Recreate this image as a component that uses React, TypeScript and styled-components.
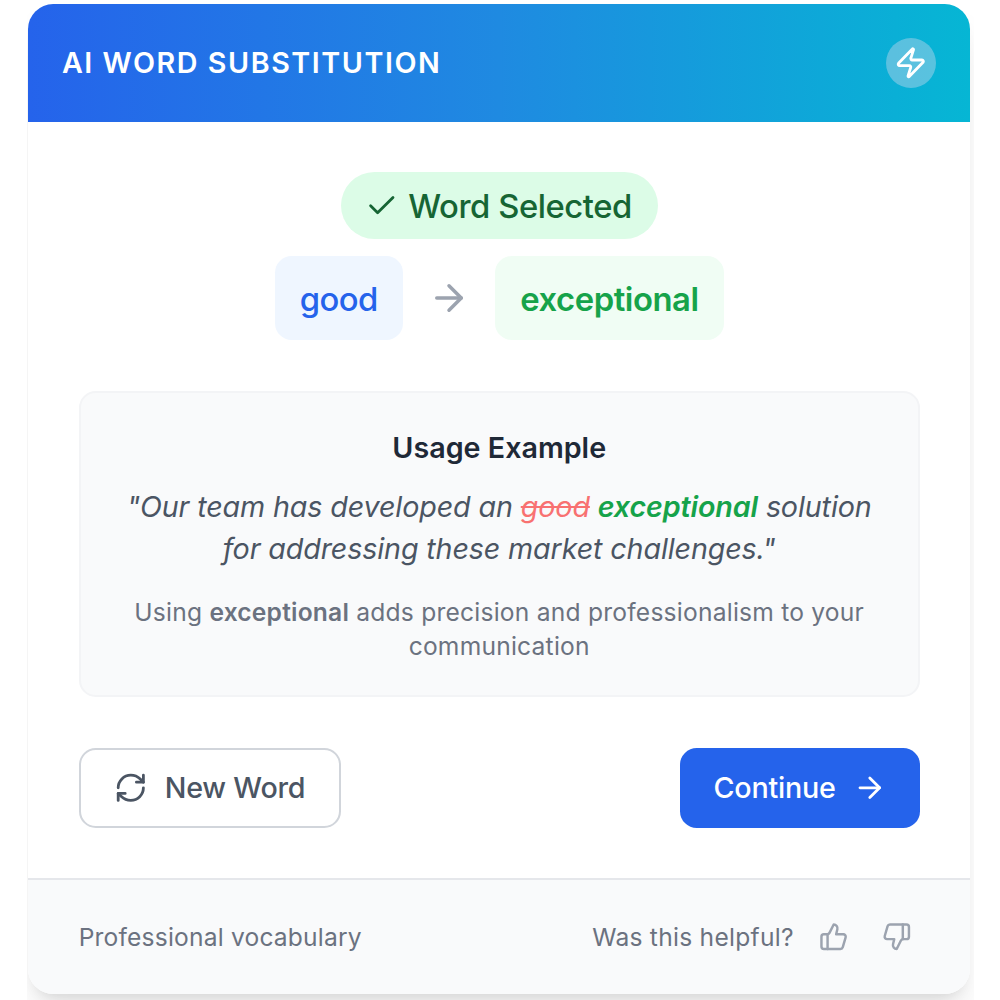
import React from "react";
import styled, { createGlobalStyle } from "styled-components";
import { ArrowRight, Check, RefreshCw, ThumbsDown, ThumbsUp, Zap } from "lucide-react";

const GlobalStyle = createGlobalStyle`
  *, *::before, *::after { box-sizing: border-box; }
  body {
    margin: 0;
    background: #ffffff;
    font-family: Inter, "Liberation Sans", sans-serif;
    -webkit-font-smoothing: antialiased;
  }
  h2, h3, p { margin: 0; }
  svg { display: block; flex-shrink: 0; }
`;

const Stage = styled.main`
  height: 1000px;
  margin: 0 26px 0 27px;
  padding: 4.2px 3.9px 0 1.3px;
  overflow: hidden;
`;

const Card = styled.section`
  border-radius: 25.2px;
  overflow: hidden;
  background: #ffffff;
  box-shadow:
    0 21px 31.5px -6.3px rgba(0, 0, 0, 0.1),
    0 8.4px 12.6px -8.4px rgba(0, 0, 0, 0.1);
`;

const Header = styled.header`
  display: flex;
  align-items: center;
  justify-content: space-between;
  height: 117.6px;
  padding: 0 34.2px 0 33.6px;
  background: linear-gradient(to right, #2563eb, #1f8ae1 50%, #06b6d4);
  color: #ffffff;
`;

const Title = styled.h2`
  padding-top: 1px;
  font-size: 28.7px;
  line-height: 42px;
  font-weight: 600;
  letter-spacing: 1.55px;
  text-transform: uppercase;
`;

const HeaderBadge = styled.div`
  display: flex;
  align-items: center;
  justify-content: center;
  width: 50.4px;
  height: 50.4px;
  border-radius: 50%;
  background: rgba(223, 222, 238, 0.38);
`;

const Content = styled.div`
  display: flex;
  flex-direction: column;
  padding: 50.4px;
`;

const StatusPill = styled.div`
  display: flex;
  align-items: center;
  align-self: center;
  gap: 9.4px;
  height: 67.2px;
  padding: 0 26px 0 24.8px;
  border-radius: 34px;
  background: #dcfce7;
  color: #166534;
  font-size: 32.8px;
  line-height: 50.4px;
  font-weight: 500;
  letter-spacing: -0.45px;

  span { padding-top: 1.4px; }
`;

const Comparison = styled.div`
  display: flex;
  align-items: center;
  justify-content: center;
  gap: 25.2px;
  margin-top: 16.8px;
  color: #9ca3af;
`;

const WordChip = styled.div<{ $tone: "old" | "new" }>`
  padding: 17.8px 25.2px 15.8px;
  border-radius: 16.8px;
  font-size: 32.8px;
  line-height: 50.4px;
  font-weight: ${({ $tone }) => ($tone === "new" ? 600 : 500)};
  letter-spacing: ${({ $tone }) => ($tone === "new" ? "-0.45px" : "-0.6px")};
  color: ${({ $tone }) => ($tone === "new" ? "#16a34a" : "#2563eb")};
  background: ${({ $tone }) => ($tone === "new" ? "#f0fdf4" : "#eff6ff")};
`;

const Example = styled.section`
  margin-top: 50.4px;
  padding: 34.6px 33.6px 32.6px;
  border: 2.1px solid #f3f4f6;
  border-radius: 16.8px;
  background: #f9fafb;
  text-align: center;
`;

const ExampleTitle = styled.h3`
  color: #1f2937;
  font-size: 28.7px;
  line-height: 42px;
  font-weight: 600;
  letter-spacing: 0;
`;

const Quote = styled.p`
  margin-top: 16.8px;
  color: #4b5563;
  font-size: 28.7px;
  line-height: 42px;
  font-style: italic;
  letter-spacing: -0.13px;
`;

const Removed = styled.span`
  color: #f87171;
  text-decoration: line-through;
`;

const Added = styled.span`
  color: #16a34a;
  font-weight: 600;
  letter-spacing: -0.12px;
`;

const Note = styled.p`
  margin-top: 26px;
  margin-bottom: -0.8px;
  color: #6b7280;
  font-size: 24.6px;
  line-height: 33.6px;
  letter-spacing: 0.22px;
`;

const NoteWord = styled.span`
  font-weight: 600;
  letter-spacing: 0.2px;
`;

const Actions = styled.div`
  display: flex;
  justify-content: space-between;
  margin-top: 51.2px;
`;

const Button = styled.button<{ $primary?: boolean }>`
  display: flex;
  align-items: center;
  gap: 16.8px;
  height: 79.8px;
  padding: 0 33.6px;
  border: ${({ $primary }) => ($primary ? "none" : "2.1px solid #d1d5db")};
  border-radius: 16.8px;
  background: ${({ $primary }) => ($primary ? "#2563eb" : "#ffffff")};
  color: ${({ $primary }) => ($primary ? "#ffffff" : "#4b5563")};
  font-family: inherit;
  font-size: 28.7px;
  line-height: 42px;
  font-weight: 500;
  letter-spacing: -0.22px;
`;

const Footer = styled.footer`
  display: flex;
  align-items: center;
  justify-content: space-between;
  height: 115.5px;
  padding: 0 50.4px;
  border-top: 2.1px solid #e5e7eb;
  background: #f9fafb;
  color: #6b7280;
  font-size: 24.6px;
  line-height: 33.6px;
  letter-spacing: 0.18px;

  span { padding-top: 2px; }
`;

const Feedback = styled.div`
  display: flex;
  align-items: center;
  gap: 16.8px;
  letter-spacing: 0.26px;
`;

const IconButton = styled.button`
  display: flex;
  padding: 8.4px;
  border: none;
  background: transparent;
  color: #9ca3af;
`;

export default function App() {
  return (
    <>
      <GlobalStyle />
      <Stage>
        <Card>
          <Header>
            <Title>AI Word Substitution</Title>
            <HeaderBadge>
              <Zap size={33.6} />
            </HeaderBadge>
          </Header>
          <Content>
            <StatusPill>
              <Check size={33.6} />
              <span>Word Selected</span>
            </StatusPill>
            <Comparison>
              <WordChip $tone="old">good</WordChip>
              <ArrowRight size={42} />
              <WordChip $tone="new">exceptional</WordChip>
            </Comparison>
            <Example>
              <ExampleTitle>Usage Example</ExampleTitle>
              <Quote>
                "Our team has developed an <Removed>good</Removed> <Added>exceptional</Added> solution
                for addressing these market challenges."
              </Quote>
              <Note>
                Using <NoteWord>exceptional</NoteWord> adds precision and professionalism to your
                communication
              </Note>
            </Example>
            <Actions>
              <Button>
                <RefreshCw size={33.6} />
                <span>New Word</span>
              </Button>
              <Button $primary>
                <span>Continue</span>
                <ArrowRight size={33.6} />
              </Button>
            </Actions>
          </Content>
          <Footer>
            <span>Professional vocabulary</span>
            <Feedback>
              <span>Was this helpful?</span>
              <IconButton aria-label="Helpful">
                <ThumbsUp size={29.4} />
              </IconButton>
              <IconButton aria-label="Not helpful">
                <ThumbsDown size={29.4} />
              </IconButton>
            </Feedback>
          </Footer>
        </Card>
      </Stage>
    </>
  );
}
